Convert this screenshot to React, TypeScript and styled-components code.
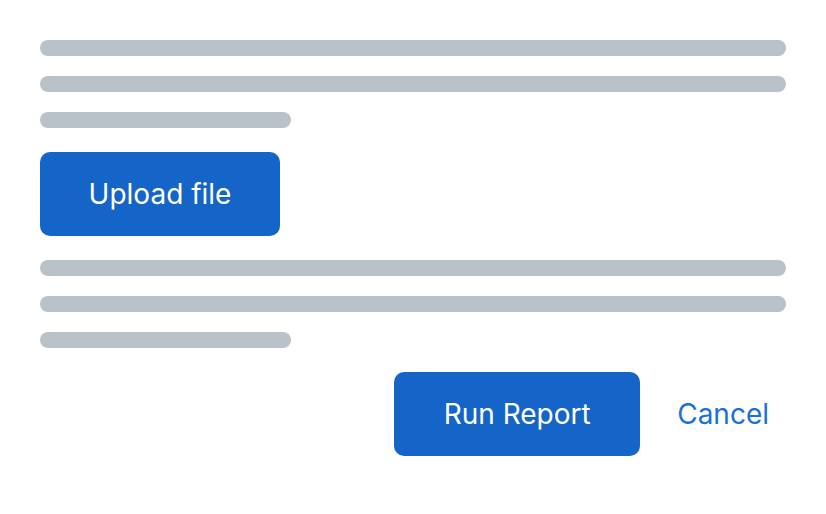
import React from "react";
import styled, { createGlobalStyle } from "styled-components";

const Global = createGlobalStyle`
  html, body { margin: 0; padding: 0; background: #ffffff; }
  body { font-family: Inter, "Noto Sans", sans-serif; }
`;

const Page = styled.div`
  display: flex;
  flex-direction: column;
  padding: 40px;
  width: 826px;
  box-sizing: border-box;
`;

const Lines = styled.div`
  display: flex;
  flex-direction: column;
  gap: 20px;
`;

const Line = styled.div<{ $short?: boolean }>`
  height: 16px;
  border-radius: 8px;
  background: #b8c2c8;
  width: ${(p) => (p.$short ? "251px" : "100%")};
`;

const Button = styled.button<{ $w: number }>`
  width: ${(p) => p.$w}px;
  height: 84px;
  border: none;
  border-radius: 10px;
  background: #1565c8;
  color: #ffffff;
  font-family: Inter, "Noto Sans", sans-serif;
  font-size: 28px;
  font-weight: 400;
  padding: 0;
  cursor: pointer;
`;

const Section = styled.div`
  margin: 24px 0;
`;

const Actions = styled.div`
  display: flex;
  justify-content: flex-end;
  align-items: center;
  margin-top: 24px;
  padding-right: 17px;
  gap: 37px;
`;

const LinkButton = styled.button`
  border: none;
  background: none;
  padding: 0;
  color: #1a6fdc;
  font-family: Inter, "Noto Sans", sans-serif;
  font-size: 28px;
  cursor: pointer;
`;

export default function App() {
  return (
    <>
      <Global />
      <Page>
        <Lines>
          <Line />
          <Line />
          <Line $short />
        </Lines>
        <Section>
          <Button $w={240}>Upload file</Button>
        </Section>
        <Lines>
          <Line />
          <Line />
          <Line $short />
        </Lines>
        <Actions>
          <Button $w={246}>Run Report</Button>
          <LinkButton>Cancel</LinkButton>
        </Actions>
      </Page>
    </>
  );
}
